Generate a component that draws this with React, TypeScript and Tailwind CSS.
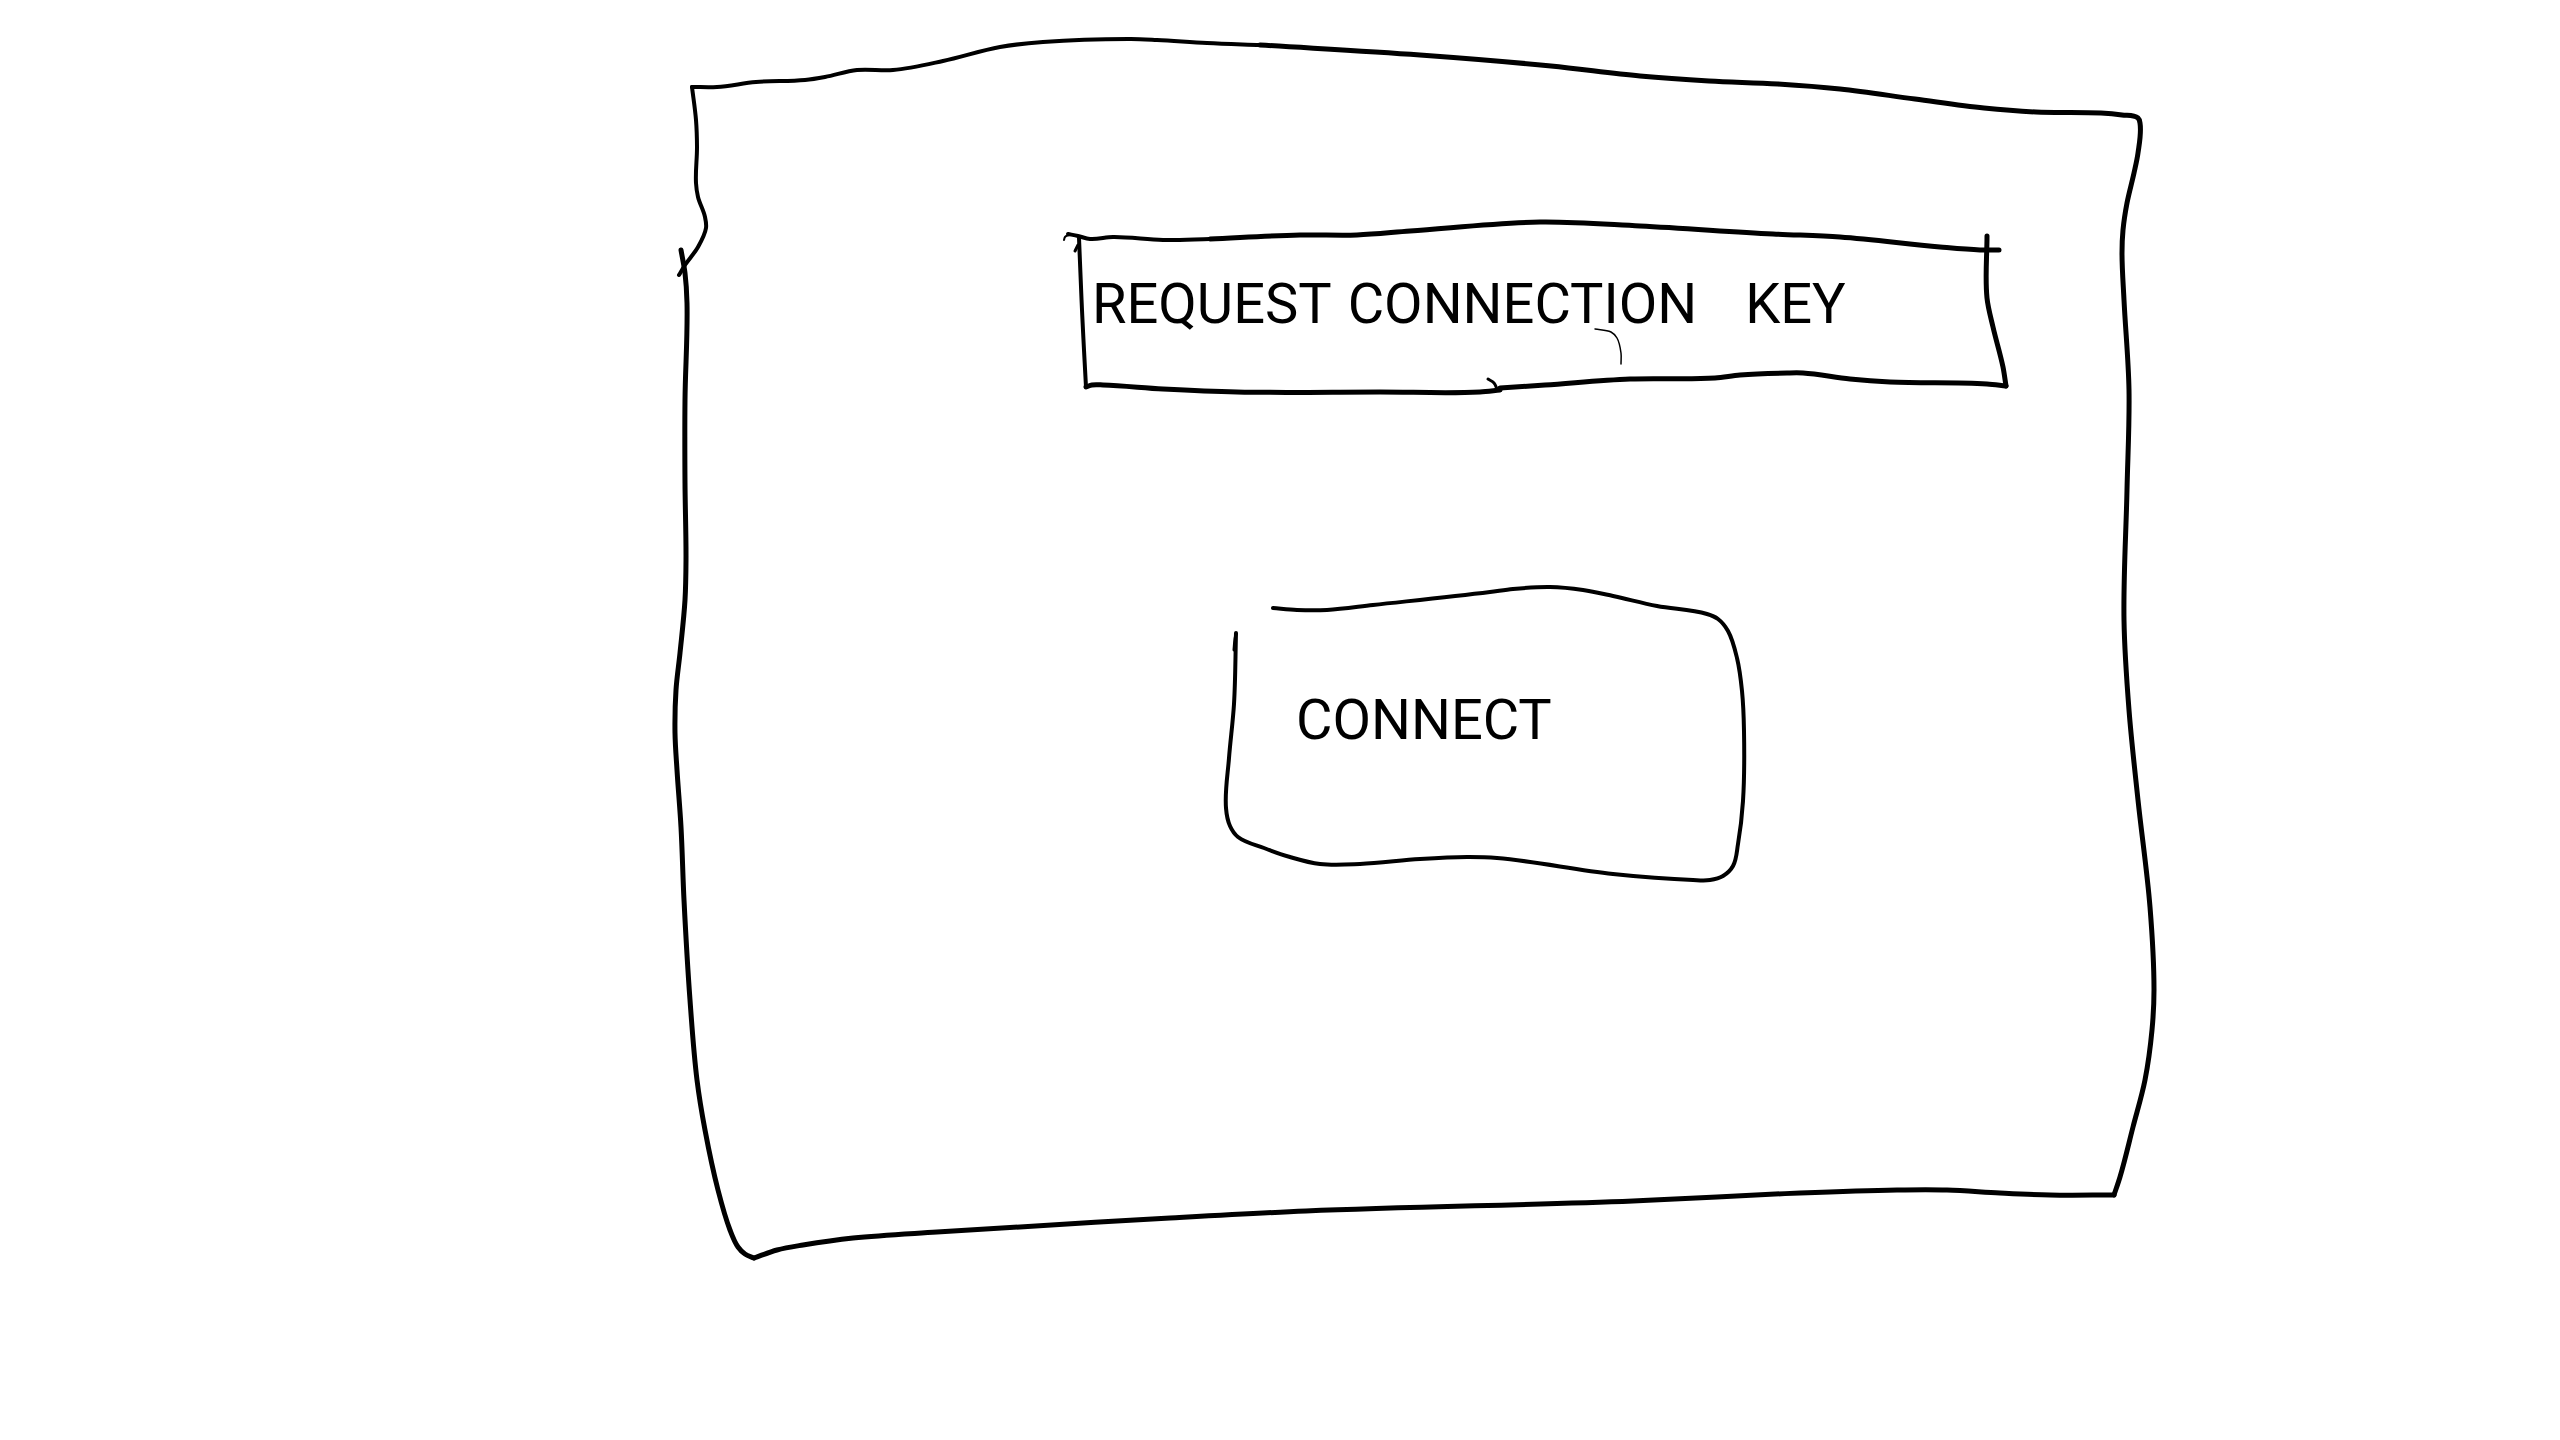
type Stroke = { points: string; width: number };

/** Turns a list of "x,y" points into a smooth pen line that runs through all of them. */
function penLine(points: string): string {
  const p = points.split(" ").map((pair) => pair.split(",").map(Number));
  const last = p.length - 1;
  const span = (i: number) => Math.hypot(p[i + 1][0] - p[i][0], p[i + 1][1] - p[i][1]);

  // Direction at a point: the mean of the directions of both neighbouring segments.
  const direction = (i: number) => {
    let x = 0;
    let y = 0;
    for (const s of [i - 1, i]) {
      if (s < 0 || s >= last) continue;
      x += (p[s + 1][0] - p[s][0]) / span(s);
      y += (p[s + 1][1] - p[s][1]) / span(s);
    }
    const len = Math.hypot(x, y) || 1;
    return [x / len, y / len];
  };

  let d = `M${p[0][0]} ${p[0][1]}`;
  for (let i = 0; i < last; i++) {
    const h = span(i) / 3;
    const [ax, ay] = direction(i);
    const [bx, by] = direction(i + 1);
    const [x0, y0] = p[i];
    const [x1, y1] = p[i + 1];
    d += `C${x0 + ax * h} ${y0 + ay * h} ${x1 - bx * h} ${y1 - by * h} ${x1} ${y1}`;
  }
  return d;
}

function Outline({ viewBox, strokes }: { viewBox: string; strokes: Stroke[] }) {
  return (
    <svg
      aria-hidden="true"
      viewBox={viewBox}
      preserveAspectRatio="none"
      className="pointer-events-none absolute inset-0 h-full w-full overflow-visible"
      fill="none"
      stroke="black"
      strokeLinecap="round"
      strokeLinejoin="round"
    >
      {strokes.map((s) => (
        <path key={s.points} d={penLine(s.points)} strokeWidth={s.width} />
      ))}
    </svg>
  );
}

const windowStrokes: Stroke[] = [
  {
    width: 4,
    points:
      "692,87 717,87 756,82 805,80 825,77 857,70 893,70 943,61 1000,47 1043,42 1131,39 1157,40 1207,43 1260,45",
  },
  {
    width: 5,
    points:
      "1260,45 1420,55 1551,66 1640,76 1709,81 1778,84 1840,89 1915,99 1984,108 2036,112 2101,113 2122,115 2138,118 2140,123 2138,153 2134,173 2127,203 2123,230 2122,253 2124,300 2129,390 2127,490 2124,620 2129,710 2138,800 2150,907 2154,990 2152,1030 2145,1080 2133,1127 2120,1177 2114,1195",
  },
  {
    width: 5,
    points:
      "2114,1195 2050,1195 2000,1193 1947,1190 1897,1190 1800,1193 1633,1201 1306,1211 1170,1218 937,1232 853,1238 803,1245 777,1250 754,1258",
  },
  {
    width: 5,
    points:
      "754,1258 745,1254 738,1247 730,1230 718,1190 705,1130 697,1080 690,1000 684,900 681,827 677,770 675,733 676,690 680,653 685,600 686,560 685,483 685,400 687,303 685,273 681,250",
  },
  {
    width: 4,
    points: "692,87 696,120 697,147 696,183 698,197 705,217 706,228 698,247 685,265 679,275",
  },
];

const requestStrokes: Stroke[] = [
  { width: 2, points: "1064,240 1065,237 1069,235" },
  { width: 4, points: "1068,234 1078,236 1090,239 1113,237 1163,240 1210,239" },
  {
    width: 5,
    points: "1210,239 1300,235 1357,235 1410,231 1540,222 1640,226 1773,234 1840,237 1940,247 1980,250 1999,250",
  },
  { width: 5, points: "1987,236 1987,298 1993,327 2003,367 2006,386" },
  {
    width: 5,
    points: "2006,386 1987,384 1890,382 1850,379 1803,373 1787,373 1740,375 1715,378 1630,379 1545,385 1500,388",
  },
  { width: 3, points: "1488,379 1494,383 1497,389" },
  { width: 5, points: "1500,390 1480,392 1380,392 1237,392 1163,389 1103,385 1092,385 1086,387" },
  { width: 4, points: "1086,387 1084,350 1082,310 1079,238" },
  { width: 3, points: "1075,251 1078,245" },
];

const connectStrokes: Stroke[] = [
  {
    width: 4,
    points:
      "1273,607 1297,609 1327,609 1373,604 1490,591 1513,588 1550,586 1583,589 1613,595 1657,605 1707,613 1718,618 1728,630 1737,657 1742,690 1744,730 1743,800 1738,843 1733,865 1723,875 1710,879 1693,879 1613,873 1497,857 1467,856 1420,858 1360,863 1320,863 1290,856 1264,847 1238,836 1230,825 1226,807 1229,757 1234,703 1236,632",
  },
  { width: 3, points: "1234,649 1235,638 1236,633" },
];

export default function App() {
  return (
    <main className="grid min-h-screen grid-cols-[674fr_1482fr_404fr] content-start bg-white pt-9 font-['Roboto',sans-serif] text-black">
      <section className="relative col-start-2 grid grid-cols-[390fr_944fr_148fr] pt-46 pb-94">
        <Outline viewBox="674 36 1482 1224" strokes={windowStrokes} />

        <button type="button" className="relative col-start-2 flex h-44 items-start pt-11 pl-7 text-left text-[56px] leading-[80px]">
          <Outline viewBox="1064 220 944 176" strokes={requestStrokes} />
          <span className="flex gap-4 whitespace-nowrap">
            <span>REQUEST</span> <span>CONNECTION</span> <span className="pl-8">KEY</span>
          </span>
          <svg
            aria-hidden="true"
            viewBox="1594 327 30 40"
            className="absolute top-[107px] left-[56%] h-10 w-[30px]"
            fill="none"
            stroke="black"
            strokeWidth={1.5}
            strokeLinecap="round"
          >
            <path d={penLine("1596,329 1612,332 1618,338 1622,353 1622,364")} />
          </svg>
        </button>

        <div className="col-span-3 mt-47 grid grid-cols-[550fr_522fr_410fr]">
          <button type="button" className="relative col-start-2 flex h-75 items-start pt-24 pl-18 text-left text-[56px] leading-[80px]">
            <Outline viewBox="1224 583 522 300" strokes={connectStrokes} />
            CONNECT
          </button>
        </div>
      </section>
    </main>
  );
}
